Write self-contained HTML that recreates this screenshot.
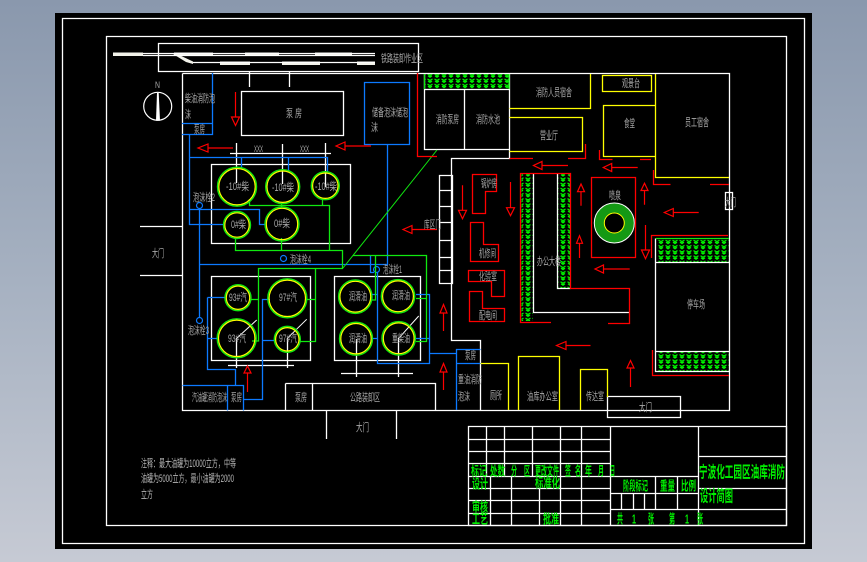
<!DOCTYPE html>
<html lang="zh">
<head>
<meta charset="utf-8">
<title>宁波化工园区油库消防设计简图</title>
<style>
html,body{margin:0;padding:0;width:867px;height:562px;overflow:hidden;background:linear-gradient(#8a98ad,#a6b1c1 50%,#c6cad4)}
svg{position:absolute;left:0;top:0;display:block}
.l{fill:none;stroke-width:1.3}
.w{stroke:#fff}.r{stroke:#f00}.b{stroke:#0c7aff}.g{stroke:#10e810}.y{stroke:#ff0}
text{font-family:"Liberation Sans","Noto Sans CJK SC",sans-serif;font-size:11px;fill:#a8a8a8;dominant-baseline:central}
.s{font-size:9px}
.t text{fill:#00f000;font-weight:700;font-size:13px}
.t .b16{font-size:16px}
.n{fill:#b4b4b4}
</style>
</head>
<body>
<svg width="867" height="562" viewBox="0 0 867 562" xmlns="http://www.w3.org/2000/svg">
<defs>
<pattern id="bush" width="7" height="5.2" patternUnits="userSpaceOnUse">
<path d="M0.5 1 L3 2.4 L5.5 1 M1 3 L3 4.4 L5 3 M3 2.4 V5" fill="none" stroke="#00ff00" stroke-width="1.2"/>
</pattern>
</defs>
<rect x="55" y="13" width="757" height="536" fill="#000"/>
<!-- frames -->
<path class="l w" d="M62.5 18.5H804.5V543.5H62.5Z M106.5 36.5H786.5V525.5H106.5Z"/>
<!-- rail -->
<path class="l w" d="M158.5 43.5H418.5V71.5H158.5Z"/>
<path d="M113 52.5H143V56H113Z M174 52.5H213V56H174Z M245 52.5H279V56H245Z M315 52.5H352V56H315Z M220 61.5H250V65H220Z M282 61.5H320V65H282Z M357 61.5H375V65H357Z M173 54L177 54 193 61.5 193 64 186 62Z" fill="#f2f2ea"/>
<path class="l w" d="M143 53.5H375 M143 55.5H375 M193 62.5H375"/>
<!-- north -->
<circle cx="157.7" cy="106.3" r="14" fill="none" stroke="#fff" stroke-width="1.2"/>
<path d="M157 92.7H158.7L160 120.7H156Z" fill="#fff"/>
<text x="155" y="85" class="s" textLength="5" lengthAdjust="spacingAndGlyphs">N</text>
<!-- bushes -->
<rect x="425" y="74" width="84" height="15" fill="url(#bush)"/>
<rect x="521.5" y="174" width="11.5" height="147" fill="url(#bush)"/>
<rect x="558" y="174" width="12" height="114" fill="url(#bush)"/>
<rect x="657" y="239" width="72" height="23" fill="url(#bush)"/>
<rect x="657" y="352" width="72" height="19" fill="url(#bush)"/>
<!-- fountain -->
<circle cx="614.3" cy="223" r="20" fill="#149914" stroke="#fff"/>
<circle cx="614.3" cy="223" r="10" fill="#000" stroke="#ff0"/>
<!-- white structure -->
<path class="l w" d="M182.5 73.5H729.5V410.5H182.5V73.5
M249.5 72V87 M289.5 72V87
M241.5 91.5H343.5V135.5H241.5Z
M236.5 143V183 M282.5 144V184 M325.5 143V187 M230 153.5H331
M211.5 164.5H350.5V243.5H211.5Z
M140 226.5H182 M140 275.5H182
M211.5 276.5H310.5V360.5H211.5Z
M334.5 276.5H420.5V360.5H334.5Z
M236.5 338V368 M287.5 338V368 M228 365.5H294
M356.5 339V377 M398.5 338V377 M341 373.5H413
M285.5 383.5H435.5V410.5 M285.5 383.5V410.5 M312.5 383.5V410.5
M326.5 410V439 M396.5 410V439
M424.5 74V149.5H509.5V74 M424.5 89.5H509.5 M464.5 89.5V149.5 M509.5 149V158.5H451.5V340.5H480.5V410
M439.5 175.5H452.5V283.5H439.5Z M439.5 190.5H452 M439.5 206.5H452 M439.5 222.5H452 M439.5 240.5H452 M439.5 257.5H452 M439.5 270.5H452
M533.5 173V312.5H629.5 M557.5 173V288.5H570.5
M725.5 192.5H732.5V209.5H725.5Z
M655.5 238.5V371.5H729.5 M655.5 262.5H729.5 M655.5 351.5H729.5
M607.5 396.5H680.5V417.5H607.5Z"/>
<path d="M236.7 338.3L256.7 320 M287.3 338.3L306.7 319.3 M398.7 338.3L418.7 316" stroke="#fff" fill="none"/>
<!-- blue -->
<path class="l b" d="M212.5 73V134.5H182 M182 123.5H212.5
M364.5 82.5H409.5V144.5H364.5Z M387.5 144.5V264.5H199.5V208
M189.5 134V224.5H224 M189.5 157.5H327.5V172 M241.5 157V168 M288.5 157V170
M189.5 209.5H259.5V224.5H265
M207.5 297.5H225 M207.5 297.5V369.5H235.5V385.5 M207.5 338.5H217
M199.5 264V317
M182.5 385.5H243.5V410.5 M227.5 385.5V410.5
M243.5 399.5H262.5V299.5H270 M262.5 340.5H274
M370.5 255V272.5H374 M377.5 272V363.5H429.5V294.5H416 M429.5 338.5H416 M429.5 353.5H456 M372 294.5H377 M372 338.5H377
M456.5 410V349.5H480.5 M456.5 363.5H480.5"/>
<circle cx="199.5" cy="205.5" r="3" fill="none" stroke="#0c7aff" stroke-width="1.2"/>
<circle cx="199.5" cy="320.5" r="3" fill="none" stroke="#0c7aff" stroke-width="1.2"/>
<circle cx="283.5" cy="258.5" r="3" fill="none" stroke="#0c7aff" stroke-width="1.2"/>
<circle cx="376.5" cy="269.5" r="3" fill="none" stroke="#0c7aff" stroke-width="1.2"/>
<!-- green -->
<path class="l g" d="M424.5 74V89 M509 74V89 M656 238.5H729
M249.5 199V205.5H329.5V250.5 M281.5 203V207 M322.5 200V205.5
M235.5 238V250.5H342.5V268.5H258.5V341H252 M281.5 238V250.5
M315.5 268.5V341.5H300 M307 299.5H315.5 M250.5 299.5H258.5
M353 255.5H426.5V341.5H416 M416 298.5H426.5 M375.5 255.5V300H371"/>
<path d="M343 268L437 150" stroke="#10e810" fill="none"/>
<!-- tanks -->
<g fill="none">
<g stroke="#10e810" stroke-width="1.4">
<circle cx="237" cy="186.7" r="19.5"/><circle cx="282.7" cy="186.7" r="17"/><circle cx="325.3" cy="185.7" r="14"/><circle cx="237" cy="225" r="13.5"/><circle cx="282" cy="224" r="17"/>
<circle cx="238" cy="297.7" r="13"/><circle cx="287.3" cy="298.3" r="19.5"/><circle cx="236.7" cy="338.3" r="19.5"/><circle cx="287.3" cy="339.3" r="13"/>
<circle cx="355.3" cy="296.7" r="16.7"/><circle cx="398" cy="296.3" r="16.7"/><circle cx="356" cy="338.7" r="16.5"/><circle cx="398.7" cy="338.3" r="16.7"/>
</g>
<g stroke="#ff0" stroke-width="1.2">
<circle cx="237" cy="186.7" r="18.2"/><circle cx="282.7" cy="186.7" r="15.7"/><circle cx="325.3" cy="185.7" r="12.7"/><circle cx="237" cy="225" r="12.2"/><circle cx="282" cy="224" r="15.7"/>
<circle cx="238" cy="297.7" r="11.7"/><circle cx="287.3" cy="298.3" r="18.2"/><circle cx="236.7" cy="338.3" r="18.2"/><circle cx="287.3" cy="339.3" r="11.7"/>
<circle cx="355.3" cy="296.7" r="15.4"/><circle cx="398" cy="296.3" r="15.4"/><circle cx="356" cy="338.7" r="15.2"/><circle cx="398.7" cy="338.3" r="15.4"/>
</g>
</g>
<!-- yellow -->
<path class="l y" d="M509.5 108.5H590.5V74 M509.5 117.5H582.5V151.5H509.5
M602.5 75.5H651.5V91.5H602.5Z M655.5 105.5H603.5V156.5H655.5 M655.5 74V177.5H729
M480.5 363.5H508.5V410 M518.5 410V356.5H559.5V410 M580.5 410V369.5H607.5V397"/>
<!-- red -->
<path class="l r" d="M417.5 73V156.5H437
M585.5 144V158.5H568 M509.5 158.5H533
M599.5 150V159.5H612.5 M640 159.5H651 M653.5 170V184.5H670.5 M710 184.5H729
M472.5 174.5H496.5V191.5H485.5V213.5H472.5Z
M470.5 222.5H483.5V244.5H498.5V261.5H470.5Z
M468.5 270.5H504.5V296.5H491.5V281.5H468.5Z
M469.5 291.5H482.5V308.5H504.5V321.5H469.5Z
M551 322.5H520.5V173.5H570.5V288.5H629.5V323.5H608
M591.5 177.5H635.5V257.5H591.5Z
M651.5 258V235.5H728 M652.5 350V375.5H729"/>
<!-- arrows -->
<g fill="none" stroke="#f00" stroke-width="1.2">
<path d="M235.5 92V117M231.5 117H239.5L235.5 125.5Z"/>
<path d="M233 148H208M208 144V152L198 148Z"/>
<path d="M371 146H345M345 142V150L336 146Z"/>
<path d="M437 229.5H412M412 225.5V233.5L403 229.5Z"/>
<path d="M568 165.5H542M542 161.5V169.5L533.5 165.5Z"/>
<path d="M637.7 167.5H611.7M611.7 163.5V171.5L603.3 167.5Z"/>
<path d="M698.7 212.5H673.3M673.3 208.5V216.5L664.3 212.5Z"/>
<path d="M629.7 269H603.5M603.5 265V273L595 269Z"/>
<path d="M590.5 345.5H566M566 341.5V349.5L556.5 345.5Z"/>
<path d="M644.5 204.7V190.5M641 190.5H648L644.5 183.3Z"/>
<path d="M581 205.7V191.7M577.5 191.7H584.5L581 184Z"/>
<path d="M579.5 258V243.3M576.5 243.3H582.5L579.5 235.7Z"/>
<path d="M645.5 225V250M641.5 250H649.5L645.5 258.7Z"/>
<path d="M462.5 185.3V210.3M458.5 210.3H466.5L462.5 218.7Z"/>
<path d="M510.5 182V207.7M506.5 207.7H514.5L510.5 215.7Z"/>
<path d="M443.5 331V313M440 313H447L443.5 304.5Z"/>
<path d="M443.5 390V372M440 372H447L443.5 363.5Z"/>
<path d="M247.5 392V373M244 373H251L247.5 366Z"/>
<path d="M630.5 387V368M627 368H634L630.5 360.5Z"/>
</g>
<!-- labels -->
<text x="381" y="59" textLength="42" lengthAdjust="spacingAndGlyphs">铁路装卸作业区</text>
<text x="185" y="99" textLength="30" lengthAdjust="spacingAndGlyphs">柴油消防泡</text>
<text x="185" y="115" textLength="6" lengthAdjust="spacingAndGlyphs">沫</text>
<text x="194" y="130" textLength="11" lengthAdjust="spacingAndGlyphs">泵房</text>
<text x="286" y="114" textLength="7" lengthAdjust="spacingAndGlyphs">泵</text>
<text x="295" y="114" textLength="7" lengthAdjust="spacingAndGlyphs">房</text>
<text x="372" y="113" textLength="36" lengthAdjust="spacingAndGlyphs">储备泡沫储泡</text>
<text x="371" y="128" textLength="7" lengthAdjust="spacingAndGlyphs">沫</text>
<text x="254" y="149" class="s" textLength="9" lengthAdjust="spacingAndGlyphs">XXX</text>
<text x="300" y="149" class="s" textLength="9" lengthAdjust="spacingAndGlyphs">XXX</text>
<text x="436" y="120" textLength="23" lengthAdjust="spacingAndGlyphs">消防泵房</text>
<text x="476" y="120" textLength="24" lengthAdjust="spacingAndGlyphs">消防水池</text>
<text x="536" y="93" textLength="36" lengthAdjust="spacingAndGlyphs">消防人员宿舍</text>
<text x="540" y="136" textLength="18" lengthAdjust="spacingAndGlyphs">营业厅</text>
<text x="622" y="84" textLength="18" lengthAdjust="spacingAndGlyphs">观景台</text>
<text x="624" y="124" textLength="11" lengthAdjust="spacingAndGlyphs">食堂</text>
<text x="685" y="123" textLength="24" lengthAdjust="spacingAndGlyphs">员工宿舍</text>
<text x="609" y="196" textLength="12" lengthAdjust="spacingAndGlyphs">喷泉</text>
<text x="481" y="184" textLength="16" lengthAdjust="spacingAndGlyphs">锅炉房</text>
<text x="479" y="254" textLength="17" lengthAdjust="spacingAndGlyphs">机修间</text>
<text x="479" y="277" textLength="18" lengthAdjust="spacingAndGlyphs">化验室</text>
<text x="479" y="316" textLength="18" lengthAdjust="spacingAndGlyphs">配电间</text>
<text x="537" y="262" textLength="24" lengthAdjust="spacingAndGlyphs">办公大楼</text>
<text x="687" y="305" textLength="18" lengthAdjust="spacingAndGlyphs">停车场</text>
<text x="424" y="225" textLength="17" lengthAdjust="spacingAndGlyphs">库区门</text>
<text x="725" y="203" textLength="11" lengthAdjust="spacingAndGlyphs">大门</text>
<text x="350" y="398" textLength="30" lengthAdjust="spacingAndGlyphs">公路装卸区</text>
<text x="295" y="398" textLength="12" lengthAdjust="spacingAndGlyphs">泵房</text>
<text x="192" y="398" textLength="35" lengthAdjust="spacingAndGlyphs">汽油罐消防泡沫</text>
<text x="231" y="398" textLength="11" lengthAdjust="spacingAndGlyphs">泵房</text>
<text x="152" y="254" textLength="12" lengthAdjust="spacingAndGlyphs">大门</text>
<text x="356" y="428" textLength="13" lengthAdjust="spacingAndGlyphs">大门</text>
<text x="639" y="408" textLength="13" lengthAdjust="spacingAndGlyphs">大门</text>
<text x="193" y="198" textLength="22" lengthAdjust="spacingAndGlyphs">泡沫栓2</text>
<text x="290" y="260" textLength="21" lengthAdjust="spacingAndGlyphs">泡沫栓4</text>
<text x="383" y="270" textLength="19" lengthAdjust="spacingAndGlyphs">泡沫栓1</text>
<text x="188" y="331" textLength="21" lengthAdjust="spacingAndGlyphs">泡沫栓3</text>
<text x="465" y="356" textLength="11" lengthAdjust="spacingAndGlyphs">泵房</text>
<text x="458" y="380" textLength="24" lengthAdjust="spacingAndGlyphs">重油消防</text>
<text x="458" y="397" textLength="12" lengthAdjust="spacingAndGlyphs">泡沫</text>
<text x="490" y="396" textLength="12" lengthAdjust="spacingAndGlyphs">厕所</text>
<text x="527" y="397" textLength="31" lengthAdjust="spacingAndGlyphs">油库办公室</text>
<text x="586" y="397" textLength="18" lengthAdjust="spacingAndGlyphs">传达室</text>
<!-- tank labels -->
<g>
<text x="226" y="187" textLength="23" lengthAdjust="spacingAndGlyphs">-10#柴</text>
<text x="272" y="188" textLength="22" lengthAdjust="spacingAndGlyphs">-10#柴</text>
<text x="315" y="187" textLength="22" lengthAdjust="spacingAndGlyphs">-10#柴</text>
<text x="231" y="225" textLength="15" lengthAdjust="spacingAndGlyphs">0#柴</text>
<text x="274" y="224" textLength="16" lengthAdjust="spacingAndGlyphs">0#柴</text>
<text x="229" y="298" textLength="18" lengthAdjust="spacingAndGlyphs">93#汽</text>
<text x="279" y="298" textLength="18" lengthAdjust="spacingAndGlyphs">97#汽</text>
<text x="228" y="339" textLength="18" lengthAdjust="spacingAndGlyphs">93#汽</text>
<text x="279" y="339" textLength="18" lengthAdjust="spacingAndGlyphs">97#汽</text>
<text x="349" y="297" textLength="18" lengthAdjust="spacingAndGlyphs">润滑油</text>
<text x="392" y="296" textLength="18" lengthAdjust="spacingAndGlyphs">润滑油</text>
<text x="349" y="339" textLength="18" lengthAdjust="spacingAndGlyphs">润滑油</text>
<text x="392" y="339" textLength="18" lengthAdjust="spacingAndGlyphs">重柴油</text>
</g>
<!-- notes -->
<text class="n" x="141" y="464" textLength="95" lengthAdjust="spacingAndGlyphs">注释：最大油罐为10000立方，中等</text>
<text class="n" x="141" y="479" textLength="93" lengthAdjust="spacingAndGlyphs">油罐为5000立方，最小油罐为2000</text>
<text class="n" x="141" y="495" textLength="12" lengthAdjust="spacingAndGlyphs">立方</text>
<!-- title block -->
<path class="l w" d="M468.5 426.5H786.5V525.5H468.5Z
M468.5 439.5H610.5 M468.5 451.5H610.5 M468.5 463.5H610.5 M468.5 476.5H698.5 M468.5 488.5H610.5 M468.5 500.5H610.5 M468.5 513.5H610.5
M486.5 426V476 M504.5 426V476 M532.5 426V476 M560.5 426V525 M581.5 426V525
M490.5 476V525 M511.5 476V525 M539.5 488V525
M610.5 426V525 M698.5 426V525
M698.5 456.5H786 M698.5 488.5H786 M610.5 509.5H786 M610.5 493.5H698.5
M655.5 476V509 M677.5 476V509 M621.5 493V509 M633.5 493V509 M644.5 493V509"/>
<g class="t">
<text x="471" y="471" textLength="16" lengthAdjust="spacingAndGlyphs">标记</text>
<text x="490" y="471" textLength="15" lengthAdjust="spacingAndGlyphs">处数</text>
<text x="511" y="471" textLength="6" lengthAdjust="spacingAndGlyphs">分</text>
<text x="524" y="471" textLength="6" lengthAdjust="spacingAndGlyphs">区</text>
<text x="535" y="471" textLength="24" lengthAdjust="spacingAndGlyphs">更改文件</text>
<text x="565" y="471" textLength="6" lengthAdjust="spacingAndGlyphs">签</text>
<text x="575" y="471" textLength="6" lengthAdjust="spacingAndGlyphs">名</text>
<text x="585" y="471" textLength="7" lengthAdjust="spacingAndGlyphs">年</text>
<text x="598" y="471" textLength="6" lengthAdjust="spacingAndGlyphs">月</text>
<text x="610" y="471" textLength="5" lengthAdjust="spacingAndGlyphs">日</text>
<text x="472" y="484" textLength="16" lengthAdjust="spacingAndGlyphs">设计</text>
<text x="535" y="483" textLength="25" lengthAdjust="spacingAndGlyphs">标准化</text>
<text x="472" y="507" textLength="16" lengthAdjust="spacingAndGlyphs">审核</text>
<text x="472" y="519" textLength="16" lengthAdjust="spacingAndGlyphs">工艺</text>
<text x="543" y="519" textLength="16" lengthAdjust="spacingAndGlyphs">批准</text>
<text x="623" y="486" textLength="25" lengthAdjust="spacingAndGlyphs">阶段标记</text>
<text x="660" y="486" textLength="15" lengthAdjust="spacingAndGlyphs">重量</text>
<text x="681" y="486" textLength="15" lengthAdjust="spacingAndGlyphs">比例</text>
<text x="617" y="519" textLength="6" lengthAdjust="spacingAndGlyphs">共</text>
<text x="632" y="519" textLength="4" lengthAdjust="spacingAndGlyphs">1</text>
<text x="648" y="519" textLength="6" lengthAdjust="spacingAndGlyphs">张</text>
<text x="669" y="519" textLength="6" lengthAdjust="spacingAndGlyphs">第</text>
<text x="685" y="519" textLength="4" lengthAdjust="spacingAndGlyphs">1</text>
<text x="697" y="519" textLength="6" lengthAdjust="spacingAndGlyphs">张</text>
<text class="b16" x="699" y="473" textLength="86" lengthAdjust="spacingAndGlyphs">宁波化工园区油库消防</text>
<text class="b16" x="700" y="497" textLength="33" lengthAdjust="spacingAndGlyphs">设计简图</text>
</g>
</svg>
</body>
</html>
